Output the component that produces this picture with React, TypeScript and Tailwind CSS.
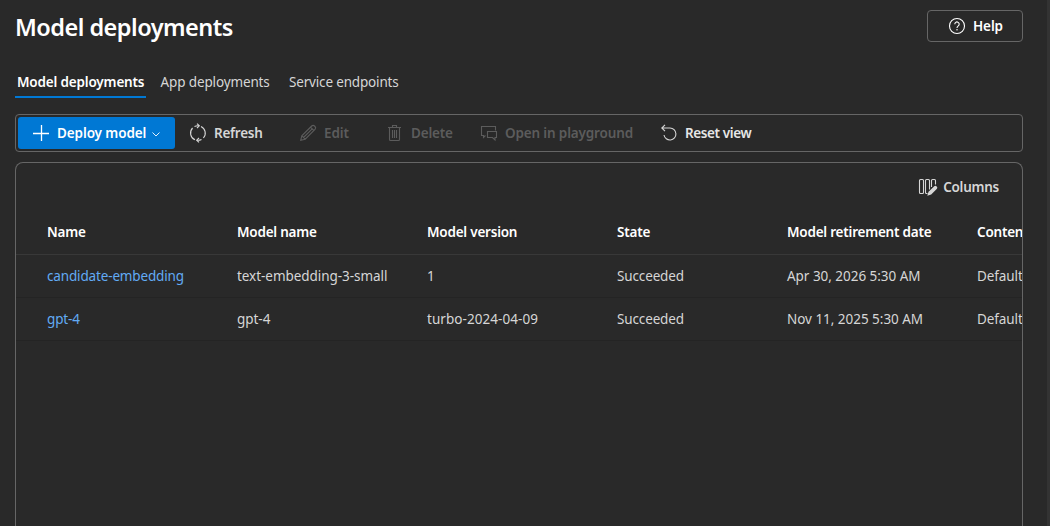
import type { ReactNode } from "react";

function Icon({ size = 16, className = "", children }: { size?: number; className?: string; children: ReactNode }) {
  return (
    <svg
      width={size}
      height={size}
      viewBox={`0 0 ${size} ${size}`}
      fill="none"
      stroke="currentColor"
      strokeWidth={1.1}
      className={`shrink-0 overflow-visible ${className}`}
    >
      {children}
    </svg>
  );
}

const rows = [
  {
    name: "candidate-embedding",
    model: "text-embedding-3-small",
    version: "1",
    state: "Succeeded",
    retirement: "Apr 30, 2026 5:30 AM",
    filter: "Default",
  },
  {
    name: "gpt-4",
    model: "gpt-4",
    version: "turbo-2024-04-09",
    state: "Succeeded",
    retirement: "Nov 11, 2025 5:30 AM",
    filter: "Default",
  },
];

const grid = "grid w-[1150px] grid-cols-[190px_190px_190px_170px_190px_190px] pl-[31px]";

export default function App() {
  return (
    <div className="flex h-[526px] w-[1050px] overflow-hidden whitespace-nowrap bg-[#292929] font-['Noto_Sans','Open_Sans',sans-serif] text-[13.5px] leading-5 text-[#d6d6d6]">
      <main className="flex w-[1047px] shrink-0 flex-col pl-[15px] pr-6">
        <header className="flex h-[66px] shrink-0 items-start justify-between">
          <h1 className="mt-[11px] text-[23.5px] font-semibold leading-8 tracking-[-0.52px] text-white">Model deployments</h1>
          <button className="mt-[10px] flex h-8 w-24 items-center rounded border border-[#666] pl-5 text-left font-semibold text-white">
            <Icon size={18} className="mr-[7px]">
              <circle cx="9" cy="9" r="7.5" />
              <path d="M6.8 7.3a2.2 2.2 0 1 1 3.5 1.6C9.400 9.600 9 10 9 11" />
              <circle cx="9" cy="12.8" r=".75" fill="currentColor" stroke="none" />
            </Icon>
            <span className="tracking-[-0.1px]">Help</span>
          </button>
        </header>

        <nav className="flex h-8 shrink-0">
          <span className="mr-[14.500px] w-[131px] border-b-2 border-[#0078d4] pl-[2px] pt-[6px] font-semibold tracking-[-0.17px] text-white">Model deployments</span>
          <span className="w-[128.500px] pt-[6px] tracking-[-0.13px]">App deployments</span>
          <span className="pt-[6px] tracking-[-0.17px]">Service endpoints</span>
        </nav>

        <div className="mt-4 flex h-[38px] shrink-0 items-center rounded border border-[#666] pl-[2px] font-semibold">
          <button className="flex h-8 w-[157px] items-center rounded-[3px] bg-[#0078d4] pl-[15px] text-left text-white">
            <Icon className="mr-2">
              <path d="M8.500 0v16M0 8.500h16" strokeWidth="1.3" />
            </Icon>
            <span className="w-[95px] tracking-[-0.1px]">Deploy model</span>
            <Icon size={8}>
              <path d="M.5 3.500 4 7l3.500-3.500" strokeWidth=".9" />
            </Icon>
          </button>
          <button className="ml-[15px] flex items-center text-left">
            <Icon className="mr-2">
              <path d="M5 14.800A7.300 7.300 0 0 1 2.600 3M4.500 1.500a7.500 7.500 0 0 1 4.500-.7M11 1.500a7.300 7.300 0 0 1 2.400 11.500M11.500 14.500a7.500 7.500 0 0 1-4.500.7" />
              <path d="m7-1.400 2.300 2.200L7 3M9 13l-2.300 2.200L9 17.400" />
            </Icon>
            <span className="w-[86px] tracking-[-0.25px]">Refresh</span>
          </button>
          <button className="flex items-center text-left text-[#5c5c5c]">
            <Icon className="mr-2">
              <path d="m.7 15.300 1.100-4.500L11.700 1a2 2 0 0 1 2.800 0l.5.5a2 2 0 0 1 0 2.800L5.200 14.200zM10.500 2.200l3.300 3.300M1.800 10.800l3.400 3.400M3.500 12.500l8.700-8.700" />
            </Icon>
            <span className="w-[63px] tracking-[-0.1px]">Edit</span>
          </button>
          <button className="flex items-center text-left text-[#5c5c5c]">
            <Icon className="mr-2">
              <path d="M1 2.500h13M5.500 2.500v-2h4v2M2.500 2.500v12q0 1 1 1h8q1 0 1-1v-12M5.500 5v8M7.500 5v8M9.500 5v8" />
            </Icon>
            <span className="w-[70px] tracking-[-0.2px]">Delete</span>
          </button>
          <button className="flex items-center text-left text-[#5c5c5c]">
            <Icon className="mr-2">
              <path d="M4.500 10.500 2.500 12.500V10.500H.5v-9h14v4M6.500 6.500h9v6h-1.500v2.500l-2.500-2.500h-5z" />
            </Icon>
            <span className="w-[156px] tracking-[-0.15px]">Open in playground</span>
          </button>
          <button className="flex items-center text-left">
            <Icon className="mr-2">
              <path d="M4-.2.800 3 4 6.200M.8 3H9a6 6 0 1 1-6 7" />
            </Icon>
            <span className="tracking-[-0.38px] text-[#e6e6e6]">Reset view</span>
          </button>
        </div>

        <section className="mt-[10px] h-[380px] shrink-0 overflow-hidden rounded-t-lg border border-b-0 border-[#666]">
          <div className="flex h-12 items-center justify-end pr-[23px] font-semibold">
            <Icon size={18} className="mr-[6px]">
              <rect x=".5" y="1.500" width="4" height="14" rx="1" />
              <path d="M8.500 15.500h-1q-1 0-1-1v-12q0-1 1-1h2q1 0 1 1v9M16.500 6.500v-4q0-1-1-1h-2q-1 0-1 1v6.500" />
              <path d="m8.300 17.700 1.200-4 5.500-5.300a1.900 1.900 0 0 1 2.700 2.700l-5.500 5.400z" fill="currentColor" stroke="none" />
            </Icon>
            <span className="tracking-[-0.25px]">Columns</span>
          </div>
          <div className={`${grid} h-[44px] items-center border-b border-[#383838] pb-px font-semibold tracking-[-0.22px] text-white`}>
            <span>Name</span>
            <span>Model name</span>
            <span>Model version</span>
            <span>State</span>
            <span>Model retirement date</span>
            <span>Content filter</span>
          </div>
          {rows.map((r) => (
            <div key={r.name} className={`${grid} h-[43px] items-center border-b border-[#242424]`}>
              <a className="tracking-[-0.15px] text-[#62abf5]">{r.name}</a>
              <span className="tracking-[-0.05px]">{r.model}</span>
              <span className="tracking-[0.06px]">{r.version}</span>
              <span className="tracking-[-0.14px]">{r.state}</span>
              <span className="tracking-[-0.03px]">{r.retirement}</span>
              <span className="tracking-[-0.1px]">{r.filter}</span>
            </div>
          ))}
        </section>
      </main>
      <div className="w-[3px] bg-[#333]" />
    </div>
  );
}
